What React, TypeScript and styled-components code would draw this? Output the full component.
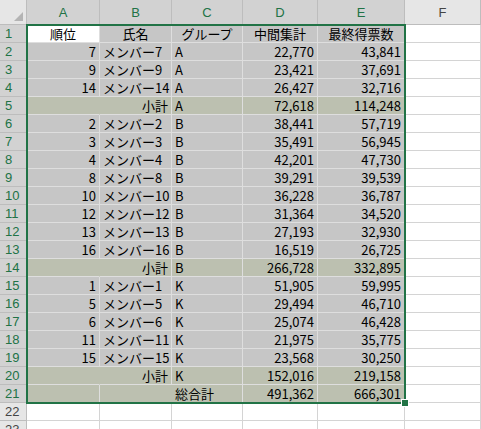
import React from 'react'
import styled, { createGlobalStyle } from 'styled-components'

const Global = createGlobalStyle`
	body { margin: 0; background: #fff; }
	* { box-sizing: border-box; }
`

const COLS = [27, 73, 72, 71, 75, 87, 76]
const LETTERS = ['A', 'B', 'C', 'D', 'E', 'F']

type Row = { kind: 'head' | 'data' | 'sub' | 'total'; cells: string[] }

const rows: Row[] = [
	{ kind: 'head', cells: ['順位', '氏名', 'グループ', '中間集計', '最終得票数'] },
	{ kind: 'data', cells: ['7', 'メンバー7', 'A', '22,770', '43,841'] },
	{ kind: 'data', cells: ['9', 'メンバー9', 'A', '23,421', '37,691'] },
	{ kind: 'data', cells: ['14', 'メンバー14', 'A', '26,427', '32,716'] },
	{ kind: 'sub', cells: ['', '小計', 'A', '72,618', '114,248'] },
	{ kind: 'data', cells: ['2', 'メンバー2', 'B', '38,441', '57,719'] },
	{ kind: 'data', cells: ['3', 'メンバー3', 'B', '35,491', '56,945'] },
	{ kind: 'data', cells: ['4', 'メンバー4', 'B', '42,201', '47,730'] },
	{ kind: 'data', cells: ['8', 'メンバー8', 'B', '39,291', '39,539'] },
	{ kind: 'data', cells: ['10', 'メンバー10', 'B', '36,228', '36,787'] },
	{ kind: 'data', cells: ['12', 'メンバー12', 'B', '31,364', '34,520'] },
	{ kind: 'data', cells: ['13', 'メンバー13', 'B', '27,193', '32,930'] },
	{ kind: 'data', cells: ['16', 'メンバー16', 'B', '16,519', '26,725'] },
	{ kind: 'sub', cells: ['', '小計', 'B', '266,728', '332,895'] },
	{ kind: 'data', cells: ['1', 'メンバー1', 'K', '51,905', '59,995'] },
	{ kind: 'data', cells: ['5', 'メンバー5', 'K', '29,494', '46,710'] },
	{ kind: 'data', cells: ['6', 'メンバー6', 'K', '25,074', '46,428'] },
	{ kind: 'data', cells: ['11', 'メンバー11', 'K', '21,975', '35,775'] },
	{ kind: 'data', cells: ['15', 'メンバー15', 'K', '23,568', '30,250'] },
	{ kind: 'sub', cells: ['', '小計', 'K', '152,016', '219,158'] },
	{ kind: 'total', cells: ['', '', '総合計', '491,362', '666,301'] },
]

const ALIGN = ['right', 'left', 'left', 'right', 'right']

const Sheet = styled.div`
	position: relative;
	display: grid;
	grid-template-columns: ${COLS.map((c) => c + 'px').join(' ')};
	grid-template-rows: 25px repeat(23, 18px);
	width: 481px;
	height: 429px;
	overflow: hidden;
	font-family: 'Noto Sans CJK JP', 'DejaVu Sans', sans-serif;
	font-size: 13px;
	color: #000;
`

const Corner = styled.div`
	background: #e6e6e6;
	border-right: 1px solid #bdbdbd;
	border-bottom: 1px solid #bdbdbd;
	position: relative;
	&::after {
		content: '';
		position: absolute;
		right: 3px;
		bottom: 3px;
		border-left: 9px solid transparent;
		border-bottom: 9px solid #b4b4b4;
	}
`

const ColHead = styled.div<{ $sel: boolean }>`
	background: ${({ $sel }) => ($sel ? '#d2d2d2' : '#e6e6e6')};
	color: ${({ $sel }) => ($sel ? '#217346' : '#444')};
	border-right: 1px solid #bdbdbd;
	border-bottom: 1px solid ${({ $sel }) => ($sel ? '#217346' : '#bdbdbd')};
	display: flex;
	align-items: center;
	justify-content: center;
	font-family: 'Liberation Sans', sans-serif;
	font-size: 13px;
`

const RowHead = styled.div<{ $sel: boolean }>`
	background: ${({ $sel }) => ($sel ? '#d2d2d2' : '#e6e6e6')};
	color: ${({ $sel }) => ($sel ? '#217346' : '#444')};
	border-right: 1px solid ${({ $sel }) => ($sel ? '#217346' : '#bdbdbd')};
	border-bottom: 1px solid #bdbdbd;
	display: flex;
	align-items: center;
	padding-left: 5px;
	font-family: 'Liberation Sans', sans-serif;
	font-size: 13px;
`

const BG = { head: '#c6c6c6', data: '#c6c6c6', sub: '#bcc0b0', total: '#bcc0b0' }

const Cell = styled.div<{ $bg: string; $align: string; $line: string; $side: string }>`
	background: ${({ $bg }) => $bg};
	border-right: 1px solid ${({ $side }) => $side};
	border-bottom: 1px solid ${({ $line }) => $line};
	text-align: ${({ $align }) => $align};
	padding: 0 3px;
	line-height: 17px;
	white-space: nowrap;
	overflow: visible;
`

const Selection = styled.div`
	position: absolute;
	left: 26px;
	top: 24px;
	width: 380px;
	height: 380px;
	border: 2px solid #217346;
	pointer-events: none;
	&::after {
		content: '';
		position: absolute;
		right: -5px;
		bottom: -5px;
		width: 6px;
		height: 6px;
		background: #217346;
		border: 1px solid #fff;
	}
`

export default function App() {
	return (
		<>
			<Global />
			<Sheet>
				<Corner />
				{LETTERS.map((l, i) => (
					<ColHead key={l} $sel={i < 5}>{l}</ColHead>
				))}
				{Array.from({ length: 23 }, (_, r) => {
					const row = rows[r]
					return (
						<React.Fragment key={r}>
							<RowHead $sel={!!row}>{r + 1}</RowHead>
							{[0, 1, 2, 3, 4].map((c) => {
								const isA1 = r === 0 && c === 0
								const bg = !row || isA1 ? '#fff' : BG[row.kind]
								const align = row?.kind === 'head' ? 'center' : row?.kind !== 'data' && c === 1 ? 'right' : ALIGN[c]
								const line = row ? '#dedede' : '#d4d4d4'
								// spill-over text: no divider after an empty cell
								const nextEmpty = row && row.kind !== 'data' && row.kind !== 'head' && c < 4 && row.cells[c + 1] !== '' && row.cells[c] === ''
								return (
									<Cell key={c} $bg={bg} $align={align} $line={line} $side={nextEmpty ? bg : line}>
										{row ? row.cells[c] : ''}
									</Cell>
								)
							})}
							<Cell $bg="#fff" $align="left" $line="#d4d4d4" $side="#d4d4d4" />
						</React.Fragment>
					)
				})}
				<Selection />
			</Sheet>
		</>
	)
}
